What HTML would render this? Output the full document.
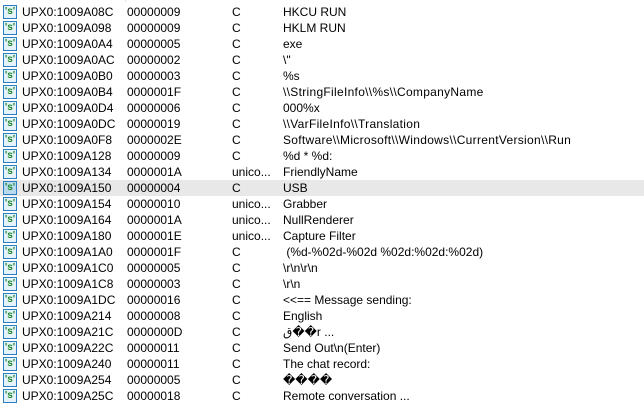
<!DOCTYPE html>
<html><head><meta charset="utf-8"><style>
body{margin:0;width:644px;height:404px;background:#fff;overflow:hidden;font-family:"Liberation Sans","DejaVu Sans",sans-serif;font-size:12px;color:#000;position:relative}
.r{position:absolute;left:0;width:644px;height:16px;line-height:16px;white-space:nowrap;margin-top:2px}
.r.h{background:#e8e8e8}
.r span{position:absolute;top:0}
.i{position:absolute;left:3px;top:1px;width:12px;height:12px;border:1px solid #2a7fc4;background:#e6f2fa;color:#1a8a2a;font-size:10px;line-height:11px;text-align:center;font-weight:bold}
.h .i{background:#b8d8ee}
.a{left:22px}.l{left:127px}.t{left:232px}.s{left:283px}
.bs{letter-spacing:0.3px}
.top{position:absolute;left:125px;top:0;width:1px;height:2px;background:#e0e0e0}
</style></head><body>
<div class="top"></div>
<div class="r" style="top:2px"><div class="i">'s'</div><span class="a">UPX0:1009A08C</span><span class="l">00000009</span><span class="t">C</span><span class="s">HKCU RUN</span></div>
<div class="r" style="top:18px"><div class="i">'s'</div><span class="a">UPX0:1009A098</span><span class="l">00000009</span><span class="t">C</span><span class="s">HKLM RUN</span></div>
<div class="r" style="top:34px"><div class="i">'s'</div><span class="a">UPX0:1009A0A4</span><span class="l">00000005</span><span class="t">C</span><span class="s">exe</span></div>
<div class="r" style="top:50px"><div class="i">'s'</div><span class="a">UPX0:1009A0AC</span><span class="l">00000002</span><span class="t">C</span><span class="s">\"</span></div>
<div class="r" style="top:66px"><div class="i">'s'</div><span class="a">UPX0:1009A0B0</span><span class="l">00000003</span><span class="t">C</span><span class="s">%s</span></div>
<div class="r" style="top:82px"><div class="i">'s'</div><span class="a">UPX0:1009A0B4</span><span class="l">0000001F</span><span class="t">C</span><span class="s bs">\\StringFileInfo\\%s\\CompanyName</span></div>
<div class="r" style="top:98px"><div class="i">'s'</div><span class="a">UPX0:1009A0D4</span><span class="l">00000006</span><span class="t">C</span><span class="s">000%x</span></div>
<div class="r" style="top:114px"><div class="i">'s'</div><span class="a">UPX0:1009A0DC</span><span class="l">00000019</span><span class="t">C</span><span class="s bs">\\VarFileInfo\\Translation</span></div>
<div class="r" style="top:130px"><div class="i">'s'</div><span class="a">UPX0:1009A0F8</span><span class="l">0000002E</span><span class="t">C</span><span class="s bs">Software\\Microsoft\\Windows\\CurrentVersion\\Run</span></div>
<div class="r" style="top:146px"><div class="i">'s'</div><span class="a">UPX0:1009A128</span><span class="l">00000009</span><span class="t">C</span><span class="s">%d * %d:</span></div>
<div class="r" style="top:162px"><div class="i">'s'</div><span class="a">UPX0:1009A134</span><span class="l">0000001A</span><span class="t">unico...</span><span class="s">FriendlyName</span></div>
<div class="r h" style="top:178px"><div class="i">'s'</div><span class="a">UPX0:1009A150</span><span class="l">00000004</span><span class="t">C</span><span class="s">USB</span></div>
<div class="r" style="top:194px"><div class="i">'s'</div><span class="a">UPX0:1009A154</span><span class="l">00000010</span><span class="t">unico...</span><span class="s">Grabber</span></div>
<div class="r" style="top:210px"><div class="i">'s'</div><span class="a">UPX0:1009A164</span><span class="l">0000001A</span><span class="t">unico...</span><span class="s">NullRenderer</span></div>
<div class="r" style="top:226px"><div class="i">'s'</div><span class="a">UPX0:1009A180</span><span class="l">0000001E</span><span class="t">unico...</span><span class="s">Capture Filter</span></div>
<div class="r" style="top:242px"><div class="i">'s'</div><span class="a">UPX0:1009A1A0</span><span class="l">0000001F</span><span class="t">C</span><span class="s">&nbsp;(%d-%02d-%02d %02d:%02d:%02d)</span></div>
<div class="r" style="top:258px"><div class="i">'s'</div><span class="a">UPX0:1009A1C0</span><span class="l">00000005</span><span class="t">C</span><span class="s">\r\n\r\n</span></div>
<div class="r" style="top:274px"><div class="i">'s'</div><span class="a">UPX0:1009A1C8</span><span class="l">00000003</span><span class="t">C</span><span class="s">\r\n</span></div>
<div class="r" style="top:290px"><div class="i">'s'</div><span class="a">UPX0:1009A1DC</span><span class="l">00000016</span><span class="t">C</span><span class="s">&lt;&lt;== Message sending:</span></div>
<div class="r" style="top:306px"><div class="i">'s'</div><span class="a">UPX0:1009A214</span><span class="l">00000008</span><span class="t">C</span><span class="s">English</span></div>
<div class="r" style="top:322px"><div class="i">'s'</div><span class="a">UPX0:1009A21C</span><span class="l">0000000D</span><span class="t">C</span><span class="s">ق��r ...</span></div>
<div class="r" style="top:338px"><div class="i">'s'</div><span class="a">UPX0:1009A22C</span><span class="l">00000011</span><span class="t">C</span><span class="s">Send Out\n(Enter)</span></div>
<div class="r" style="top:354px"><div class="i">'s'</div><span class="a">UPX0:1009A240</span><span class="l">00000011</span><span class="t">C</span><span class="s">The chat record:</span></div>
<div class="r" style="top:370px"><div class="i">'s'</div><span class="a">UPX0:1009A254</span><span class="l">00000005</span><span class="t">C</span><span class="s">����</span></div>
<div class="r" style="top:386px"><div class="i">'s'</div><span class="a">UPX0:1009A25C</span><span class="l">00000018</span><span class="t">C</span><span class="s">Remote conversation ...</span></div>
</body></html>
